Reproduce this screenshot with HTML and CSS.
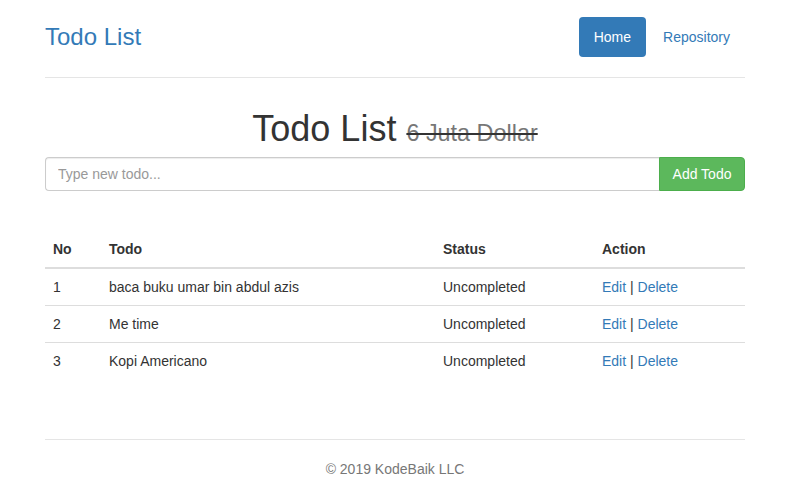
FILE: index.html
```html
<!DOCTYPE html>
<html>
<head>
<meta charset="utf-8">
<link rel="stylesheet" href="styles.css">
</head>
<body>
<div class="container">
  <div class="header">
    <h3 class="brand">Todo List</h3>
    <ul class="nav-pills">
      <li class="active"><a href="#">Home</a></li>
      <li><a href="#">Repository</a></li>
    </ul>
  </div>
  <h1 class="title">Todo List <small class="strike">6 Juta Dollar</small></h1>
  <div class="input-group">
    <input class="form-control" type="text" placeholder="Type new todo...">
    <button class="btn-success">Add Todo</button>
  </div>
  <table class="table">
    <thead>
      <tr><th class="c-no">No</th><th class="c-todo">Todo</th><th class="c-status">Status</th><th>Action</th></tr>
    </thead>
    <tbody>
      <tr><td>1</td><td>baca buku umar bin abdul azis</td><td>Uncompleted</td><td><a href="#">Edit</a> | <a href="#">Delete</a></td></tr>
      <tr><td>2</td><td>Me time</td><td>Uncompleted</td><td><a href="#">Edit</a> | <a href="#">Delete</a></td></tr>
      <tr><td>3</td><td>Kopi Americano</td><td>Uncompleted</td><td><a href="#">Edit</a> | <a href="#">Delete</a></td></tr>
    </tbody>
  </table>
  <footer class="footer">© 2019 KodeBaik LLC</footer>
</div>
</body>
</html>
```
FILE: styles.css
```css
* { box-sizing: border-box; }
html, body { margin: 0; padding: 0; background: #fff; }
body {
  font-family: "Liberation Sans", Arial, Helvetica, sans-serif;
  font-size: 14px;
  line-height: 20px;
  color: #333;
}
a { color: #337ab7; text-decoration: none; }
.container {
  width: 700px;
  margin-left: 45px;
  padding-top: 17px;
}
.header {
  display: flex;
  justify-content: space-between;
  align-items: center;
  padding-bottom: 20px;
  border-bottom: 1px solid #e5e5e5;
}
.brand {
  margin: 0;
  font-size: 24px;
  font-weight: 500;
  line-height: 40px;
  color: #337ab7;
}
.nav-pills {
  display: flex;
  list-style: none;
  margin: 0;
  padding: 0;
}
.nav-pills li + li { margin-left: 2px; }
.nav-pills a {
  display: block;
  padding: 10px 15px;
  border-radius: 4px;
  line-height: 20px;
}
.nav-pills li.active a { background: #337ab7; color: #fff; }
.title {
  text-align: center;
  font-size: 36px;
  font-weight: 500;
  line-height: 40px;
  margin: 31px 0 4px;
}
.strike {
  font-size: 65%;
  color: #777;
  font-weight: 400;
  text-decoration: line-through;
  text-decoration-color: #333;
  text-decoration-thickness: 2px;
}
.input-group { display: flex; height: 34px; }
.form-control {
  flex: 1;
  height: 34px;
  padding: 6px 12px;
  font-family: inherit;
  font-size: 14px;
  color: #555;
  border: 1px solid #ccc;
  border-right: 0;
  border-radius: 4px 0 0 4px;
  box-shadow: inset 0 1px 1px rgba(0,0,0,.075);
  outline: none;
}
.form-control::placeholder { color: #999; }
.btn-success {
  width: 86px;
  height: 34px;
  padding: 6px 12px;
  font-family: inherit;
  font-size: 14px;
  color: #fff;
  background: #5cb85c;
  border: 1px solid #4cae4c;
  border-radius: 0 4px 4px 0;
}
.table {
  width: 100%;
  margin-top: 40px;
  border-collapse: collapse;
  border-spacing: 0;
}
.table th, .table td {
  padding: 8px;
  text-align: left;
  line-height: 20px;
  vertical-align: top;
}
.table th { font-weight: 700; border-bottom: 2px solid #ddd; vertical-align: bottom; }
.table td { border-top: 1px solid #ddd; }
.table tbody tr:first-child td { border-top: 0; }
.c-no { width: 56px; }
.c-todo { width: 334px; }
.c-status { width: 159px; }
.footer {
  margin-top: 60px;
  padding-top: 19px;
  border-top: 1px solid #e5e5e5;
  color: #777;
  text-align: center;
  width: 700px;
}
```
